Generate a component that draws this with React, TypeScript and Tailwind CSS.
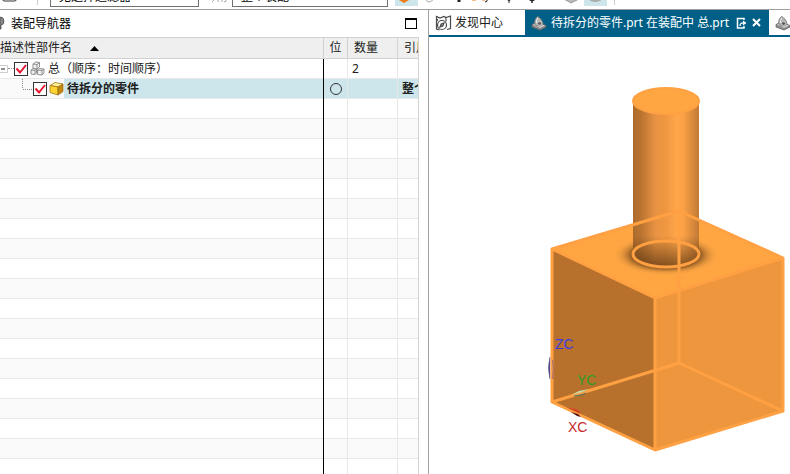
import React from "react";

const EDGE = "#ffa042";

const filters = {
  type: ["无选择过滤器"],
  scope: ["整个装配"],
};

const emptyRows = Array.from({ length: 19 }, (_, i) => i);

function PartIcon({ className }: { className?: string }) {
  return (
    <svg className={className} width="18" height="16" viewBox="0 0 18 16" aria-hidden="true">
      <path d="M2 9.5 7 7 16 10.500v1.500l-6 3-8-3z" fill="#8c8c8c" stroke="#666" strokeWidth=".8" />
      <path d="M3 9.5 7 7.500l8 3-5 2.500z" fill="#d2d2d2" />
      <path d="M5 9C4 6 5.500 3 7.500 1.500c2 .5 5 4 5.500 7-1 3-6 3.500-8 .5z" fill="#b4b4b4" stroke="#6e6e6e" strokeWidth=".8" />
      <path d="M6.300 8Q6 5 7.700 3" fill="none" stroke="#ececec" />
      <ellipse cx="9.500" cy="8.500" rx="2.300" ry="1.900" fill="#5f5f5f" stroke="#e4e4e4" strokeWidth=".8" />
    </svg>
  );
}

function DiscoveryIcon() {
  return (
    <svg width="17" height="16" viewBox="0 0 17 16" fill="none" stroke="#4a4a4a" strokeWidth="1.200" aria-hidden="true">
      <path d="M3 5.500 1.500 4V1.500L5 3l4-1.500 2 1L15.500 1v12.500L12 14.500M1.500 4v10l3 1M11 2.500v4" />
      <circle cx="7" cy="10" r="4.500" fill="#fff" />
      <path d="m5 12 1.200-3L9 8l-1.200 3zM6.200 9l1.600 2" />
    </svg>
  );
}

function AssemblyIcon() {
  return (
    <svg width="15" height="15" viewBox="0 0 15 15" fill="#f2f2f2" stroke="#858585" strokeWidth=".9" aria-hidden="true">
      <path d="M3 3 5.500 1l4 .5v4.500L7 8l-4-.5zM3 3l4 .5V8M7 3.500l2.500-2" />
      <path d="M1 9 3 7.500l3.500.5v4L5 13.500 1 13zM1 9l4 .5v4M5 9.500l1.500-1.500" />
      <path d="m7.500 9 2-1.500 4.500.5v4l-2 2-4.500-.5zM7.500 9l4.500.5v4.500M12 9.500l2-1.500" />
    </svg>
  );
}

function CubeIcon() {
  return (
    <svg width="15" height="15" viewBox="0 0 15 15" stroke="#94650b" strokeWidth=".7" aria-hidden="true">
      <path d="m1 4.500 5-3L14 3 9 6z" fill="#fff098" />
      <path d="M1 4.500 9 6v8l-8-2.500z" fill="#ffd432" />
      <path d="m9 6 5-3v7.500L9 14z" fill="#c58a12" />
    </svg>
  );
}

function Tick({ label }: { label: string }) {
  return (
    <span className="grid size-[14px] shrink-0">
      <input
        type="checkbox"
        defaultChecked
        aria-label={label}
        className="peer col-start-1 row-start-1 size-[14px] appearance-none border border-[#333] bg-white"
      />
      <svg
        viewBox="0 0 14 14"
        className="pointer-events-none invisible col-start-1 row-start-1 size-[14px] peer-checked:visible"
        fill="none"
        stroke="#e8162e"
        strokeWidth="2"
        aria-hidden="true"
      >
        <path d="m2.500 6.500 3.500 4L12 3" />
      </svg>
    </span>
  );
}

function Toolbar() {
  const select = "h-5 shrink-0 appearance-none border border-[#707070] bg-white px-2 text-[12px] leading-4 text-black";
  return (
    <div className="flex h-[10px] shrink-0 items-end overflow-hidden border-b border-[#a0a0a0] bg-white pb-[2px]">
      <svg width="50" height="8" viewBox="0 0 50 8" className="shrink-0" fill="none" aria-hidden="true">
        <path d="M2.500 0v1l1.500 1h11l1.500-1V0" stroke="#333" />
        <path d="M37.500 0v6" stroke="#ccc" />
      </svg>
      <select aria-label="类型过滤器" className={`${select} w-[149px]`}>
        {filters.type.map((o) => <option key={o}>{o}</option>)}
      </select>
      <svg width="33" height="8" viewBox="0 0 33 8" className="shrink-0" fill="none" stroke="#aaa" aria-hidden="true">
        <path d="m13 3 3-3M18 0l2 3M23 3V0M25 3q3 0 2-3" />
      </svg>
      <select aria-label="选择范围" className={`${select} w-[156px]`}>
        {filters.scope.map((o) => <option key={o}>{o}</option>)}
      </select>
      <svg width="234" height="8" viewBox="0 0 234 8" className="shrink-0" fill="none" aria-hidden="true">
        <path d="M7 0h23v7H7z" fill="#cde6eb" />
        <path d="M11 0h10v1l-5 3-5-3z" fill="#ef7b18" />
        <path d="M38 0q0 3 4 3l4-3" stroke="#aaa" />
        <path d="M71 0v3" stroke="#222" strokeWidth="3" />
        <path d="M84 0h4M94 0h3" stroke="#ef7b18" strokeWidth="3" />
        <path d="M97 3q3 0 2-3M118 0q3 3 6 0M121 0v4" stroke="#222" />
        <path d="M141 0q3 3 6 0M144 0v4" stroke="#222" strokeWidth="1.500" />
        <path d="m176 0 7 4 8-4z" fill="#bbb" stroke="#999" />
        <path d="M196 0h23v7h-23z" fill="#cde6eb" />
        <path d="M200 0q7 6 15 0z" fill="#aaa" />
        <path d="M226.500 0v6" stroke="#ccc" />
      </svg>
    </div>
  );
}

function Navigator() {
  const th = "h-[22px] border-y border-r border-[#d2d2d2] bg-[#efefef] p-0 font-normal";
  const td = "h-5 overflow-hidden border-b border-r border-[#e8e8e8] p-0 whitespace-nowrap";
  // the row line is a shadow here so the black divider stays unbroken
  const first = "h-5 border-r border-r-black p-0 align-top shadow-[inset_0_-1px_#e8e8e8]";
  return (
    <aside className="flex w-[429px] shrink-0 flex-col border-r border-[#a0a0a0] pr-[9px]">
      <div className="flex h-[27px] shrink-0 items-center justify-between">
        <div className="flex items-center gap-[6px]">
          <svg width="5" height="15" viewBox="0 0 5 15" fill="#888" stroke="#444" strokeWidth=".7" aria-hidden="true">
            <path d="M0 1q4 0 4 4T1 9v4H0z" />
          </svg>
          <h2 className="text-[12px] leading-4 text-black">装配导航器</h2>
        </div>
        <button type="button" aria-label="最大化" className="mr-[2px] h-[11px] w-3 border border-t-2 border-black" />
      </div>
      <div className="flex-1 overflow-hidden border-r border-[#d2d2d2]">
        <table className="w-full table-fixed border-separate border-spacing-0 text-[12px] leading-4 text-[#202020]">
          <colgroup>
            <col />
            <col className="w-6" />
            <col className="w-[50px]" />
            <col className="w-5" />
          </colgroup>
          <thead>
            <tr>
              <th className={`${th} text-left`}>
                <span className="flex items-center gap-[18px]">
                  描述性部件名
                  <svg width="9" height="5" viewBox="0 0 9 5" aria-hidden="true"><path d="M0 5 4.500 0 9 5z" /></svg>
                </span>
              </th>
              <th className={`${th} text-center`}>位</th>
              <th className={`${th} pl-[6px] text-left`}>数量</th>
              <th className={`${th} overflow-hidden border-r-0 pl-[6px] text-left whitespace-nowrap`}>引用集</th>
            </tr>
          </thead>
          <tbody>
            <tr>
              <td className={first}>
                <div className="flex h-[19px] items-center">
                  <button type="button" aria-label="折叠" className="h-2 w-2 shrink-0">
                    <svg width="8" height="8" viewBox="0 0 8 8" fill="none"><path d="M0 .5h7.500v7H0" stroke="#ccc" /><path d="M1 4h4" stroke="#222" /></svg>
                  </button>
                  <span className="w-[6px] border-b border-dotted border-[#999]" />
                  <Tick label="总" />
                  <span className="ml-[2px]"><AssemblyIcon /></span>
                  <span className="ml-[3px]">总（顺序：时间顺序）</span>
                </div>
              </td>
              <td className={td} />
              <td className={`${td} pl-1`}>2</td>
              <td className={`${td} border-r-0`} />
            </tr>
            <tr>
              <td className={first}>
                <div className="flex h-[19px] items-center bg-[#fafafa]">
                  <svg width="33" height="19" viewBox="0 0 33 19" fill="none" stroke="#888" strokeDasharray="1 1" className="shrink-0" aria-hidden="true">
                    <path d="M22.500 0v10M23 10.500h9" />
                  </svg>
                  <Tick label="待拆分的零件" />
                  <span className="ml-[2px]"><CubeIcon /></span>
                  <span className="flex h-full flex-1 items-center bg-[#cde6eb] pl-[3px] font-bold">待拆分的零件</span>
                </div>
              </td>
              <td className={`${td} bg-[#cde6eb]`}>
                <svg width="14" height="14" viewBox="0 0 14 14" className="mx-auto" fill="none" stroke="#333"><circle cx="7" cy="7" r="5.500" /></svg>
              </td>
              <td className={`${td} bg-[#cde6eb]`} />
              <td className={`${td} border-r-0 bg-[#cde6eb] pl-1 font-bold`}>整个部件</td>
            </tr>
            {emptyRows.map((i) => (
              <tr key={i} className="odd:bg-white even:bg-[#fafafa]">
                <td className={first} />
                <td className={td} />
                <td className={td} />
                <td className={`${td} border-r-0`} />
              </tr>
            ))}
          </tbody>
        </table>
      </div>
    </aside>
  );
}

function Tabs() {
  return (
    <nav className="flex h-[27px] shrink-0 overflow-hidden border-b-2 border-[#005f87] text-[12px] leading-4">
      <button type="button" className="flex w-24 shrink-0 items-center gap-[3px] pl-[6px] text-[#202020]">
        <DiscoveryIcon />
        发现中心
      </button>
      <div className="flex w-[244px] shrink-0 items-center bg-[#005f87] pl-[5px] text-white">
        <button type="button" className="flex items-center gap-[3px] whitespace-nowrap">
          <PartIcon />
          待拆分的零件.prt 在装配中 总.prt
        </button>
        <svg width="11" height="12" viewBox="0 0 11 12" className="ml-[7px] shrink-0" fill="none" stroke="#fff" aria-hidden="true">
          <path d="M8 3V1.500H1.500v9.500H8V9" strokeWidth="1.500" />
          <path d="M4 9q0-3.500 4-3" strokeWidth="1.300" />
          <path d="M7 3.500 10.500 6 7 8.500z" fill="#fff" stroke="none" />
        </svg>
        <button type="button" aria-label="关闭" className="ml-[5px]">
          <svg width="9" height="9" viewBox="0 0 9 9" stroke="#fff" strokeWidth="2"><path d="m1 1 7 7M8 1 1 8" /></svg>
        </button>
      </div>
      <button type="button" aria-label="总.prt" className="flex shrink-0 items-center pl-[5px]">
        <PartIcon />
      </button>
    </nav>
  );
}

function Model() {
  return (
    <svg width="361" height="437" viewBox="429 37 361 437" className="shrink-0" role="img" aria-label="待拆分的零件">
      <defs>
        <linearGradient id="shaft">
          <stop offset="0" stopColor="#ad6c2c" />
          <stop offset=".12" stopColor="#b97330" />
          <stop offset=".35" stopColor="#e99443" />
          <stop offset=".5" stopColor="#ef9741" />
          <stop offset=".66" stopColor="#ffa64a" />
          <stop offset=".76" stopColor="#fba147" />
          <stop offset="1" stopColor="#c27a35" />
        </linearGradient>
        <linearGradient id="base" x2="0" y2="1">
          <stop offset="0" stopColor="#4a2a0c" stopOpacity="0" />
          <stop offset="1" stopColor="#4a2a0c" stopOpacity=".65" />
        </linearGradient>
        <radialGradient id="shade">
          <stop offset=".55" stopColor="#5a3510" />
          <stop offset=".68" stopColor="#8f5a24" stopOpacity=".75" />
          <stop offset=".82" stopColor="#c98238" stopOpacity=".4" />
          <stop offset="1" stopColor="#ffa642" stopOpacity="0" />
        </radialGradient>
      </defs>
      <path d="m552 249 127-38 104 47-128 40z" fill="#ffa642" />
      <path d="m552 249 103 49v152l-103-48z" fill="#b7712c" />
      <path d="m655 298 128-40v153l-128 39z" fill="#ee963e" />
      <ellipse cx="666" cy="255" rx="54" ry="21" fill="url(#shade)" />
      <path d="M633 101h66v153q-1 12-33 12t-33-12z" fill="url(#shaft)" />
      <path d="M633 236h66v18q-1 12-33 12t-33-12z" fill="url(#base)" />
      <ellipse cx="666" cy="101" rx="33" ry="13" fill="#ffa642" stroke={EDGE} strokeWidth="2" />
      <path d="M550 357q-3 11 0 22z" fill="#423779" stroke="#6a5d95" strokeWidth=".6" />
      <g fill="none" stroke={EDGE} strokeWidth="3" strokeLinejoin="round">
        <path d="m552 249 127-38 104 47-128 40zM552 249v153l103 48 128-39V258M655 298v152M679 211v152l-127 39M679 363l104 48" />
        <ellipse cx="666" cy="254" rx="33" ry="13" />
      </g>
      <path d="M552.500 360q1.500 9 0 19" stroke="#a06a78" fill="none" />
      <path d="m571 395 8-4 10-2-7 3z" fill="#c4dcb0" />
      <path d="m574 396 6-1 6-2-4 2z" fill="#47766a" stroke="#47766a" strokeWidth=".6" />
      <path d="m566 407 12 3 3 4z" fill="#dc3a22" />
      <path d="m571 412 7 2 3 3-4-1z" fill="#5a1a14" />
      <g className="font-['Liberation_Sans'] text-[14px]">
        <text x="555" y="349" fill="#3d3de0">ZC</text>
        <text x="577" y="385" fill="#2f9d25">YC</text>
        <text x="568" y="432" fill="#c5292b">XC</text>
      </g>
    </svg>
  );
}

export default function App() {
  return (
    <div className="flex h-screen flex-col overflow-hidden bg-white font-['Noto_Sans','Noto_Sans_CJK_SC',sans-serif]">
      <Toolbar />
      <div className="flex min-h-0 flex-1">
        <Navigator />
        <main className="flex min-w-0 flex-1 flex-col overflow-hidden">
          <Tabs />
          <Model />
        </main>
      </div>
    </div>
  );
}
